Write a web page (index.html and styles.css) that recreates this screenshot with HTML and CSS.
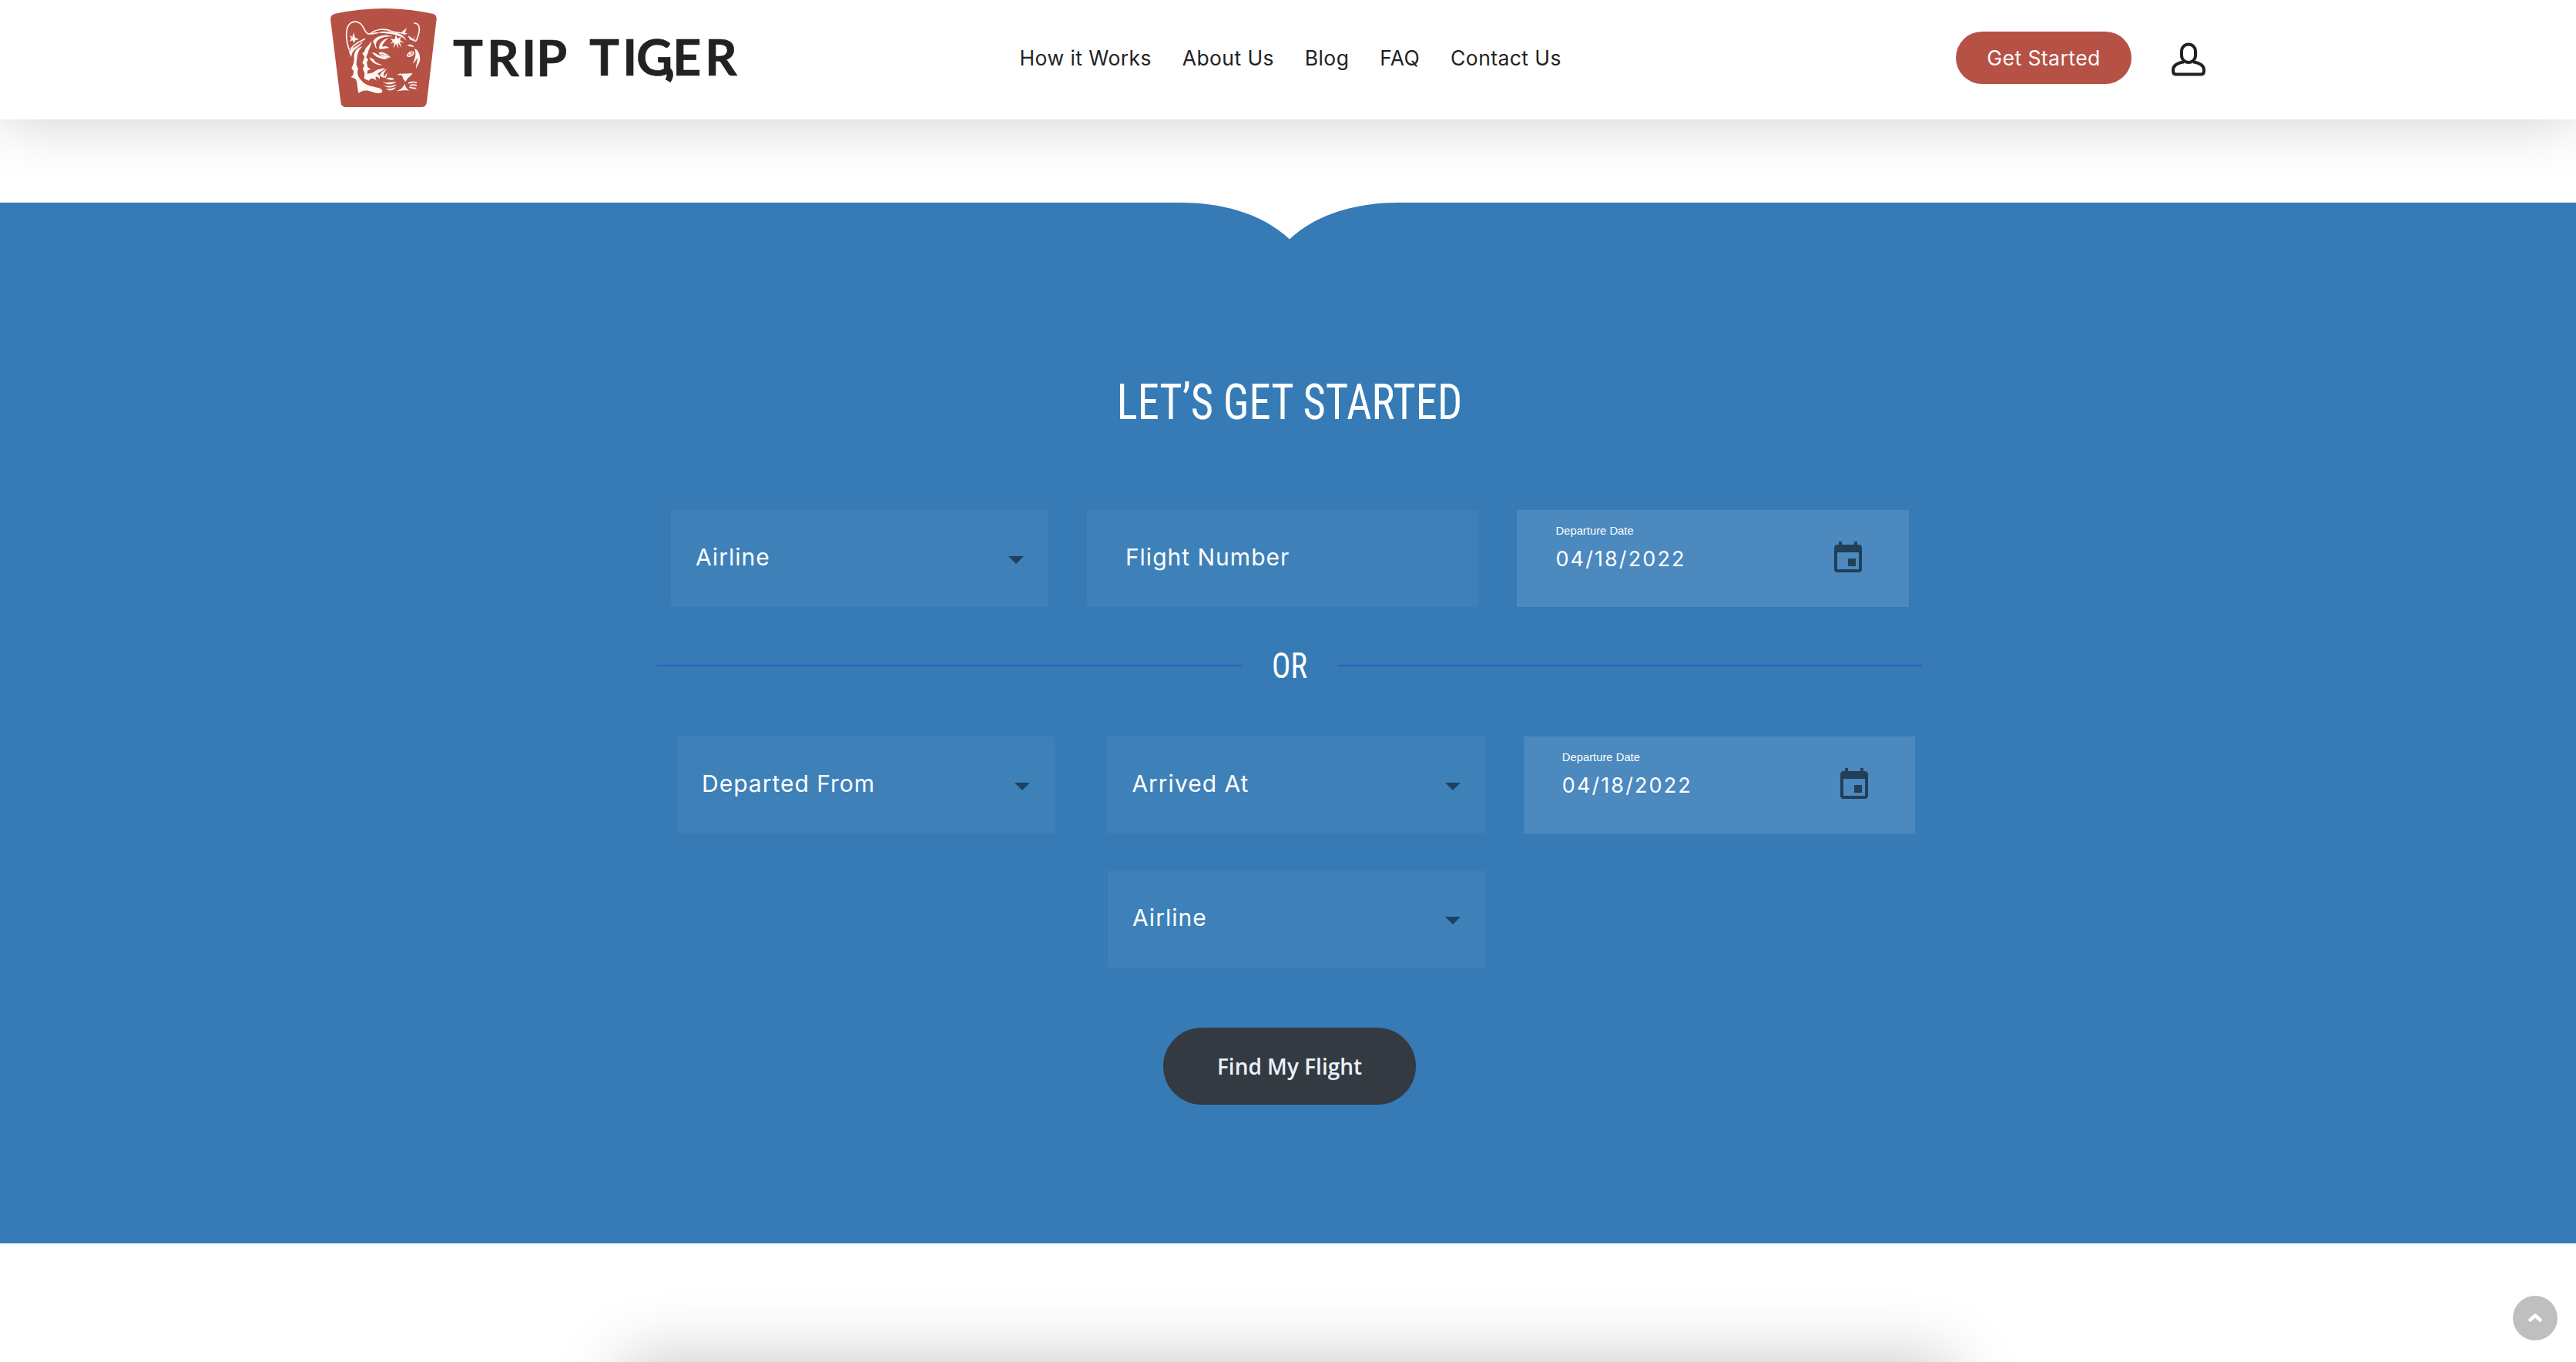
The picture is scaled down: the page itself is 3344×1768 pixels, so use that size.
FILE: index.html
```html
<!DOCTYPE html>
<html lang="en">
<head>
<meta charset="utf-8">
<title>Trip Tiger</title>
<link rel="stylesheet" href="styles.css">
</head>
<body>
<header class="header">
  <svg class="logo" viewBox="0 0 560 150" role="img" aria-label="Trip Tiger">
    <g transform="scale(.33333)">
      <path class="badge" d="M76 53Q265 13 454 53Q471 57 470 74L432 398Q429 417 411 417H118Q99 417 97 398L57 74Q57 57 76 53Z"/>
      <g class="line">
        <path d="M130 194C118 165 116 125 124 105C134 82 158 79 174 92C188 104 190 126 202 131C214 134 224 130 240 128"/>
        <path d="M212 131C236 112 270 110 292 121C308 127 322 126 336 129"/>
        <path d="M384 90C400 90 406 106 402 124C399 140 395 152 389 160"/>
        <path d="M137 190C148 172 168 164 190 152"/>
        <path d="M248 206C262 205 276 211 286 222C270 222 256 218 248 206"/>
        <path d="M356 216C362 203 372 200 381 203C380 214 370 221 358 219"/>
        <path d="M322 290C334 286 340 292 346 296M368 332C376 329 384 330 391 332M362 323C372 319 382 319 391 321M366 340C374 342 382 344 389 344"/>
      </g>
      <g class="fill">
        <path d="M131 136L142 145L147 127L153 146L168 153L154 157L149 167L143 157L131 161L138 151Z"/>
        <path d="M129 202C140 184 165 181 184 160C176 180 152 188 142 206L137 222Z"/>
        <path d="M181 181C158 186 147 204 149 226C150 246 142 257 139 268L147 275L146 290L137 301L154 307C164 320 160 346 167 363C178 354 192 351 206 354C224 360 242 366 256 361C264 353 256 346 244 342C222 336 198 334 184 320C166 304 158 288 165 268L158 252C160 224 161 200 181 181Z"/>
        <path d="M216 160C208 178 192 184 190 200L181 208L190 222L181 245L189 254L183 268L190 286L188 306L206 314L213 307C222 304 230 307 236 314L232 300C240 297 244 301 249 309C251 298 248 290 240 288C250 278 263 276 270 264C252 270 240 268 228 279C219 286 206 284 200 289L202 274L214 270L202 262L198 242L204 234L196 222L204 204C204 192 216 184 216 160Z"/>
        <path d="M209 223C212 240 236 257 259 253C242 247 232 245 226 232Z"/>
        <path d="M219 204C225 215 245 229 270 231L284 224C264 224 242 216 234 208Z"/>
        <path d="M222 163C234 138 270 132 300 142C272 139 244 148 236 164C232 174 234 184 240 190C228 188 232 172 222 163Z"/>
        <path d="M246 190C246 168 262 153 284 148C268 160 260 172 258 182C270 178 278 180 286 187C270 187 258 194 246 190Z"/>
        <path d="M240 128C266 118 300 126 326 131C340 138 350 148 353 160C342 145 330 142 318 139C294 130 266 128 240 128Z"/>
        <path d="M290 150L306 154L312 136L318 151L332 142L328 156L344 167L326 163L335 186L319 166L322 190L312 170L302 188L305 166L288 170L300 161Z"/>
        <path d="M332 127L354 109L347 129L358 130L344 136Z"/>
        <path d="M358 137L382 154L383 138L386 162L366 154Z"/>
        <path d="M384 190C396 192 405 208 406 228C407 242 396 252 390 268C389 250 398 240 394 224C391 236 386 240 378 248C388 224 392 208 384 190Z"/>
        <path d="M356 176C366 170 378 174 383 184C374 180 364 182 356 176Z"/>
        <path d="M258 206Q270 209 278 220Q264 217 258 206ZM362 208L374 206Q372 214 364 214Z"/>
        <path d="M326 289C342 284 362 288 376 284C374 294 362 298 356 308L349 318L340 307C340 298 334 292 326 289Z"/>
        <path d="M346 325C348 340 356 348 364 353C348 350 336 353 315 355C332 348 342 340 346 325Z"/>
        <path d="M250 296C252 282 262 276 278 268C266 280 260 290 266 304ZM264 300L280 282L272 304Z"/>
        <path d="M274 306Q288 298 306 308Q292 315 274 306ZM260 318C276 326 292 318 314 320C296 330 276 332 260 318ZM264 332C284 338 300 332 315 330C300 343 280 344 264 332ZM272 345C288 348 302 343 313 340C302 353 286 357 272 345Z"/>
      </g>
    </g>
    <g class="wordmark">
      <text y="99" x="178 222 267 286">TRIP</text>
      <text y="97.500" x="355 398 416 463 505">TIGER</text>
      <path class="tail" d="M456 90Q463 95 457 105"/>
    </g>
  </svg>
  <nav class="nav">
    <a>How it Works</a>
    <a>About Us</a>
    <a>Blog</a>
    <a>FAQ</a>
    <a>Contact Us</a>
  </nav>
  <a class="cta">Get Started</a>
  <svg class="account" viewBox="0 0 44 44" aria-label="Account">
    <rect x="13" y="2.5" width="18" height="23.5" rx="9"/>
    <path d="M16 25.2C7.500 26.300 2 30.500 2 35.500V37.500Q2 41.500 6 41.500H38Q42 41.500 42 37.500V35.500C42 30.500 36.500 26.300 28 25.200"/>
  </svg>
</header>

<main>
  <section class="search">
    <svg class="notch" viewBox="0 0 300 48" aria-hidden="true">
      <path d="M8 0C58 0 112 12 150 47.500C188 12 242 0 292 0Z"/>
    </svg>
    <h1 class="title">LET’S GET STARTED</h1>
    <form class="form">
      <div class="row row-first">
        <div class="field select">Airline<i class="arrow"></i></div>
        <div class="field input">Flight Number</div>
        <div class="field date">
          <div class="date-text"><small>Departure Date</small><span>04/18/2022</span></div>
          <svg class="calendar" viewBox="0 0 24 24"><path d="M17 12h-5v5h5v-5zM16 1v2H8V1H6v2H5c-1.110 0-1.990.9-1.990 2L3 19c0 1.100.89 2 2 2h14c1.100 0 2-.9 2-2V5c0-1.100-.9-2-2-2h-1V1h-2zm3 18H5V8h14v11z"/></svg>
        </div>
      </div>
      <div class="divider"><span>OR</span></div>
      <div class="row row-second">
        <div class="field select">Departed From<i class="arrow"></i></div>
        <div class="field select">Arrived At<i class="arrow"></i></div>
        <div class="field date">
          <div class="date-text"><small>Departure Date</small><span>04/18/2022</span></div>
          <svg class="calendar" viewBox="0 0 24 24"><path d="M17 12h-5v5h5v-5zM16 1v2H8V1H6v2H5c-1.110 0-1.990.9-1.990 2L3 19c0 1.100.89 2 2 2h14c1.100 0 2-.9 2-2V5c0-1.100-.9-2-2-2h-1V1h-2zm3 18H5V8h14v11z"/></svg>
        </div>
      </div>
      <div class="row row-third">
        <div class="field select">Airline<i class="arrow"></i></div>
      </div>
      <button class="submit" type="button">Find My Flight</button>
    </form>
  </section>
  <div class="next">
    <section class="card"></section>
  </div>
</main>

<a class="to-top" aria-label="Back to top">
  <svg viewBox="0 0 58 58"><path d="M22.500 31.500L29 25.500L35.500 31.500"/></svg>
</a>
</body>
</html>
```
FILE: styles.css
```css
* { box-sizing: border-box; }

html, body { height: 100%; }

body {
  margin: 0;
  overflow: hidden;
  background: #fff;
  font-family: Inter, "Liberation Sans", sans-serif;
}

.header {
  position: relative;
  z-index: 2;
  display: flex;
  align-items: center;
  height: 155px;
  padding: 0 481px 5px 410px;
  background: #fff;
  box-shadow: 0 0 80px rgba(0, 0, 0, .2);
}

.logo {
  flex: none;
  width: 560px;
  height: 150px;
}

.badge { fill: #b65145; }
.line { fill: none; stroke: #fdf8f4; stroke-width: 5; stroke-linecap: round; }
.fill { fill: #fdf8f4; }

.wordmark text {
  font: 700 65px Lato, sans-serif;
  fill: #232122;
  stroke: #232122;
  stroke-width: .6px;
}

.tail { fill: none; stroke: #232122; stroke-width: 8; }

.nav {
  display: flex;
  gap: 39.8px;
  margin-left: 353.5px;
  font-size: 26.5px;
  letter-spacing: .42px;
  line-height: 40px;
  color: #222;
  white-space: nowrap;
}

.cta {
  width: 228px;
  height: 68px;
  margin-left: auto;
  border-radius: 34px;
  background: #b65145;
  color: #fff;
  font-size: 26.5px;
  line-height: 69px;
  letter-spacing: .45px;
  text-align: center;
}

.account {
  width: 44px;
  height: 44px;
  margin: 4px 0 0 52px;
  fill: none;
  stroke: #222;
  stroke-width: 4;
}

.search {
  height: 1351px;
  margin-top: 108px;
  padding-left: 4px;
  background: #367bb6;
  color: #fff;
}

.notch {
  display: block;
  width: 300px;
  height: 48px;
  margin: 0 auto;
  fill: #fff;
}

.title {
  margin: 171px 0 100px;
  font: 400 65.5px/80px "Roboto Condensed", Roboto, sans-serif;
  text-align: center;
  transform: scaleX(.863);
}

.form { width: 1642px; margin: 0 auto; }

.row { display: flex; }

.row-first {
  gap: 49.5px;
  padding-left: 18px;
}

.row-second { padding-left: 26px; }
.row-second .select + .select { margin-left: 68px; }
.row-second .date { margin-left: 50px; }

.row-third {
  margin-top: 48px;
  padding-left: 585px;
}

.field {
  display: flex;
  align-items: center;
  justify-content: space-between;
  height: 126px;
  padding-bottom: 4px;
  background: #3e81b8;
  font-size: 30px;
  letter-spacing: 1px;
}

.select {
  width: 490.4px;
  padding-left: 32px;
  padding-right: 32px;
}

.input {
  width: 508.6px;
  padding-left: 50px;
}

.row-first .date { margin-left: .5px; }

.arrow {
  margin-top: 8px;
  border: 10px solid transparent;
  border-top-color: #1f405f;
  border-bottom: 0;
}

.date {
  width: 508.5px;
  padding: 0 55px 0 50px;
  background: #4b89bf;
}

.date-text {
  display: flex;
  flex-direction: column;
  gap: 12px;
  align-self: flex-start;
  padding-top: 17px;
}

.date-text small {
  font: 14.8px/20px "Liberation Sans", sans-serif;
  letter-spacing: 0;
}

.date-text span {
  font-size: 27px;
  line-height: 30px;
  letter-spacing: 2.1px;
}

.calendar {
  width: 48px;
  height: 48px;
  fill: #223f58;
}

.divider {
  display: flex;
  align-items: center;
  height: 60px;
  margin: 46px 0 62px;
}

.divider::before,
.divider::after {
  content: "";
  flex: 1;
  height: 2px;
  background: #2a62c2;
}

.divider span {
  width: 124px;
  font: 400 46px/60px "Roboto Condensed", Roboto, sans-serif;
  text-align: center;
  transform: scaleX(.88);
}

.submit {
  display: block;
  width: 328px;
  height: 100px;
  margin: 78px auto 0;
  padding: 0;
  border: 0;
  border-radius: 50px;
  background: #343a41;
  color: #e9f1fa;
  font: 600 28px "Open Sans", sans-serif;
}

.next {
  height: 154px;
  padding-top: 154px;
  overflow: hidden;
}

.card {
  width: 1724px;
  height: 400px;
  margin: 0 auto;
  background: #fff;
  box-shadow: 0 0 84px rgba(0, 0, 0, .24);
}

.to-top {
  position: fixed;
  right: 24px;
  bottom: 28px;
  width: 58px;
  height: 58px;
  border-radius: 50%;
  background: #bfbfbf;
}

.to-top svg {
  display: block;
  fill: none;
  stroke: #fff;
  stroke-width: 4.500;
  stroke-linecap: round;
  stroke-linejoin: round;
}
```
